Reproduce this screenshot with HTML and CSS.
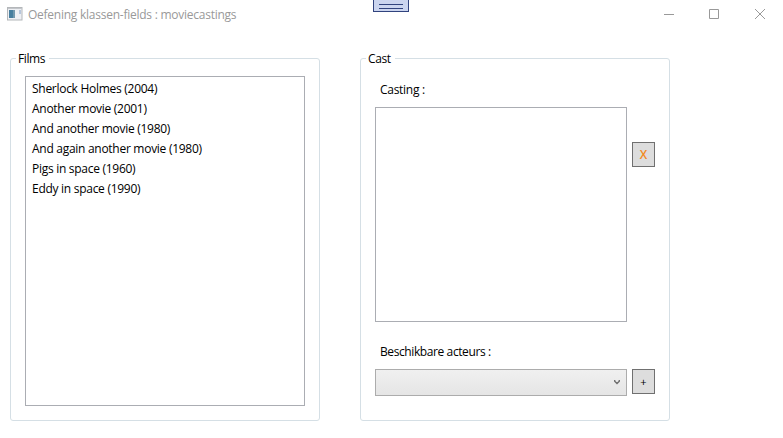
FILE: index.html
```html
<!DOCTYPE html>
<html lang="nl">
<head>
<meta charset="utf-8">
<title>Oefening klassen-fields : moviecastings</title>
<link rel="stylesheet" href="styles.css">
</head>
<body>
<div class="window">
  <header class="titlebar">
    <svg class="app-icon" width="16" height="14" viewBox="0 0 16 14">
      <rect x=".5" y=".5" width="14.5" height="12.5" fill="#eef0f4" stroke="#b4b7ba"/>
      <path d="M1 1.5h14" stroke="#c3c6ca"/>
      <rect x="2" y="3" width="6" height="8" fill="#477f9f"/>
      <rect x="6" y="3" width="2" height="8" fill="#7399ae"/>
      <rect x="12" y="3" width="2" height="4" fill="#b7c7dc"/>
    </svg>
    <h1 class="title">Oefening klassen-fields : moviecastings</h1>
    <div class="controls">
      <svg width="45" height="28" viewBox="0 0 45 28"><path d="M17 14.5h10" /></svg>
      <svg width="45" height="28" viewBox="0 0 45 28"><path d="M17.5 9.500h9v9h-9z" /></svg>
      <svg width="45" height="28" viewBox="0 0 45 28"><path d="M18 9l10 10M28 9l-10 10" /></svg>
    </div>
    <div class="handle"></div>
  </header>
  <main class="panels">
    <section class="group">
      <h2 class="legend"><span>Films</span></h2>
      <ul class="list films">
        <li>Sherlock Holmes (2004)</li>
        <li>Another movie (2001)</li>
        <li>And another movie (1980)</li>
        <li>And again another movie (1980)</li>
        <li>Pigs in space (1960)</li>
        <li>Eddy in space (1990)</li>
      </ul>
    </section>
    <section class="group">
      <h2 class="legend"><span>Cast</span></h2>
      <div class="label casting">Casting :</div>
      <div class="row">
        <div class="list cast"></div>
        <button class="btn remove">X</button>
      </div>
      <div class="label actors">Beschikbare acteurs :</div>
      <div class="row">
        <div class="combo"><svg width="6" height="5" viewBox="0 0 6 5"><path d="M.7 0v1.200L3 3.500 5.300 1.200V0" fill="none" stroke="#707070" stroke-width="1.400"/></svg></div>
        <button class="btn add">+</button>
      </div>
    </section>
  </main>
</div>
</body>
</html>
```
FILE: styles.css
```css
* { box-sizing: border-box; }
body {
  margin: 0;
  background: #fff;
  color: #000;
  font: 12px/16px "Open Sans", "Noto Sans", sans-serif;
  letter-spacing: -0.28px;
}
h1, h2, ul { margin: 0; padding: 0; font: inherit; }
.window { width: 783px; height: 438px; overflow: hidden; }
.titlebar { position: relative; display: flex; height: 28px; padding: 0 1px 0 7px; }
.app-icon { margin-top: 7px; }
.title { margin: 7px 0 0 5px; color: #999; white-space: nowrap; letter-spacing: -0.25px; }
.controls { display: flex; margin-left: auto; }
.controls path { fill: none; stroke: #999; }
.handle {
  position: absolute;
  left: 373px;
  top: 0;
  width: 36px;
  height: 12px;
  border: 1px solid #31437e;
  border-top: 0;
  background: #cbd5ef;
}
.handle::before {
  content: "";
  display: block;
  width: 24px;
  height: 3px;
  margin: 4px auto 0;
  border: solid #31437e;
  border-width: 1px 0;
}
.panels { display: flex; gap: 40px; padding: 30px 0 0 10px; }
.group {
  width: 310px;
  height: 363px;
  padding: 0 14px;
  border: 1px solid #d5dfe5;
  border-radius: 3px;
}
.legend { height: 17px; margin-left: -9px; margin-top: -8px; }
.legend span { display: inline-block; padding: 0 4px 0 2px; background: #fff; letter-spacing: -0.4px; }
.list { border: 1px solid #abadb3; background: #fff; list-style: none; }
.films { width: 280px; height: 330px; margin-top: 8px; padding: 2px 6px 0; }
.films li { height: 20px; line-height: 20px; white-space: nowrap; }
.label { padding-left: 5px; }
.casting { margin-top: 14px; height: 25px; }
.row { display: flex; gap: 5px; }
.cast { width: 252px; height: 215px; }
.btn {
  width: 23px;
  height: 25px;
  padding: 0;
  border: 1px solid #707070;
  border-radius: 0;
  background: #ddd;
  font: inherit;
  color: #000;
  text-align: center;
}
.remove { margin-top: 35px; color: #f28a1e; font-weight: 600; }
.add { font-size: 11px; }
.actors { margin-top: 22px; height: 25px; letter-spacing: -0.4px; }
.combo {
  display: flex;
  justify-content: flex-end;
  width: 252px;
  height: 27px;
  padding: 10px 6px 0;
  border: 1px solid #acacac;
  background: linear-gradient(#f0f0f0, #e5e5e5);
}
```
